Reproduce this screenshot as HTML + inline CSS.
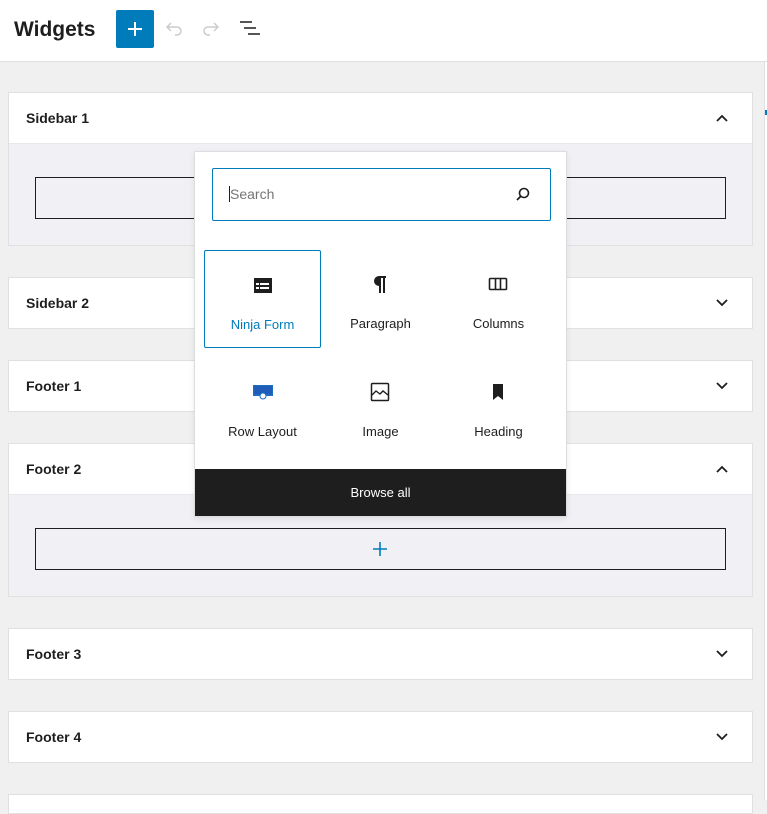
<!DOCTYPE html><html><head><style>
*{box-sizing:border-box;margin:0;padding:0}
body{width:767px;height:800px;overflow:hidden;background:#f0f0f0;font-family:"Liberation Sans",sans-serif;color:#1e1e1e;position:relative}
.hdr{position:absolute;left:0;top:0;width:767px;height:62px;background:#fff;border-bottom:1px solid #e0e0e0}
.abs{position:absolute}
.panel{position:absolute;left:8px;width:745px;background:#fff;border:1px solid #e0e0e0}
.ph{height:50px;display:flex;align-items:center;padding-left:17px;font-size:14px;font-weight:bold;color:#1e1e1e;position:relative}
.ph svg{position:absolute;right:24px;top:21px}
.pb{background:#f0f0f5;height:102px;position:relative;border-top:1px solid #e8e8ec}
.box{position:absolute;left:26px;right:26px;top:33px;height:42px;border:1px solid #1e1e1e}
.tile{position:absolute;width:117px;height:98px;text-align:center;font-size:13px;color:#1e1e1e}
.tile svg{position:absolute;left:48px;top:24px}
.tile span{position:absolute;left:0;right:0;top:66px}
</style></head><body>
<div class="hdr">
<div class="abs" style="left:14px;top:18px;font-size:21px;font-weight:bold">Widgets</div>
<div class="abs" style="left:116px;top:10px;width:38px;height:38px;background:#007cba;border-radius:2px"><svg width="38" height="38"><path d="M19 12v14M12 19h14" stroke="#fff" stroke-width="2"/></svg></div>
<svg class="abs" style="left:162px;top:18px" width="24" height="24"><path d="M6 9h9a4 4 0 0 1 0 8h-2M9 5l-4 4 4 4" stroke="#ccc" stroke-width="1.5" fill="none"/></svg>
<svg class="abs" style="left:199px;top:18px" width="24" height="24"><path d="M18 9H9a4 4 0 0 0 0 8h2M15 5l4 4-4 4" stroke="#ccc" stroke-width="1.5" fill="none"/></svg>
<svg class="abs" style="left:238px;top:18px" width="24" height="24"><path d="M2 4h12M6 10h12M10 16h12" stroke="#1e1e1e" stroke-width="1.6"/></svg>
</div>
<div class="abs" style="left:764px;top:62px;width:1px;height:738px;background:#e0e0e0"></div>
<div class="abs" style="left:765px;top:62px;width:2px;height:738px;background:#fff"></div>
<div class="abs" style="left:765px;top:110px;width:2px;height:5px;background:#007cba"></div>

<div class="panel" style="top:92px"><div class="ph">Sidebar 1<svg width="12" height="8"><path d="M1 7l5-5 5 5" stroke="#1e1e1e" stroke-width="1.8" fill="none"/></svg></div><div class="pb"><div class="box"></div></div></div>
<div class="panel" style="top:277px"><div class="ph">Sidebar 2<svg width="12" height="8"><path d="M1 1l5 5 5-5" stroke="#1e1e1e" stroke-width="1.8" fill="none"/></svg></div></div>
<div class="panel" style="top:360px"><div class="ph">Footer 1<svg width="12" height="8"><path d="M1 1l5 5 5-5" stroke="#1e1e1e" stroke-width="1.8" fill="none"/></svg></div></div>
<div class="panel" style="top:443px"><div class="ph">Footer 2<svg width="12" height="8"><path d="M1 7l5-5 5 5" stroke="#1e1e1e" stroke-width="1.8" fill="none"/></svg></div><div class="pb"><div class="box"><svg style="position:absolute;left:337px;top:13px" width="14" height="14"><path d="M7 0v14M0 7h14" stroke="#007cba" stroke-width="1.6"/></svg></div></div></div>
<div class="panel" style="top:628px"><div class="ph">Footer 3<svg width="12" height="8"><path d="M1 1l5 5 5-5" stroke="#1e1e1e" stroke-width="1.8" fill="none"/></svg></div></div>
<div class="panel" style="top:711px"><div class="ph">Footer 4<svg width="12" height="8"><path d="M1 1l5 5 5-5" stroke="#1e1e1e" stroke-width="1.8" fill="none"/></svg></div></div>
<div class="panel" style="top:794px;height:20px"></div>

<div class="abs" style="left:194px;top:151px;width:373px;height:366px;background:#fff;border:1px solid #ddd;box-shadow:0 2px 6px rgba(0,0,0,.08)">
<div class="abs" style="left:17px;top:16px;width:339px;height:53px;border:1.5px solid #007cba;border-radius:2px">
<div class="abs" style="left:16px;top:17px;font-size:14px;color:#757575"><span style="border-left:1px solid #1e1e1e"></span>Search</div>
<svg class="abs" style="left:301px;top:17px" width="18" height="18"><circle cx="10" cy="7" r="4.5" stroke="#1e1e1e" stroke-width="1.6" fill="none"/><path d="M7 10l-4 4" stroke="#1e1e1e" stroke-width="1.8"/></svg>
</div>
<div class="tile" style="left:9px;top:98px;border:1px solid #007cba;border-radius:2px;color:#007cba"><svg width="20" height="20"><rect x="1" y="3" width="18" height="15" fill="#1e1e1e"/><rect x="3" y="8" width="3" height="2" fill="#fff"/><rect x="7" y="8" width="9" height="2" fill="#fff"/><rect x="3" y="12" width="3" height="2" fill="#fff"/><rect x="7" y="12" width="9" height="2" fill="#fff"/></svg><span>Ninja Form</span></div>
<div class="tile" style="left:127px;top:98px"><svg width="20" height="20"><path d="M9 2h7v2h-1v15h-2V4h-2v15H9v-7a5 5 0 0 1 0-10z" fill="#1e1e1e"/></svg><span>Paragraph</span></div>
<div class="tile" style="left:245px;top:98px"><svg width="20" height="20"><rect x="1.5" y="4.5" width="17" height="11" rx="1" stroke="#1e1e1e" stroke-width="1.6" fill="none"/><path d="M7.5 5v10M12.5 5v10" stroke="#1e1e1e" stroke-width="1.6"/></svg><span>Columns</span></div>
<div class="tile" style="left:9px;top:206px"><svg width="22" height="20"><rect x="1" y="3" width="20" height="11" fill="#1b6ec2"/><rect x="2" y="4" width="18" height="8" fill="#1f5db8"/><circle cx="11" cy="14" r="3" fill="#fff" stroke="#1b6ec2" stroke-width="1"/></svg><span>Row Layout</span></div>
<div class="tile" style="left:127px;top:206px"><svg width="20" height="20"><rect x="1.5" y="1.5" width="17" height="17" rx="1" stroke="#1e1e1e" stroke-width="1.5" fill="none"/><path d="M2 13l4-4 4 3 3-3 5 4" stroke="#1e1e1e" stroke-width="1.4" fill="none"/></svg><span>Image</span></div>
<div class="tile" style="left:245px;top:206px"><svg width="20" height="20"><path d="M5 2h10v16l-5-4-5 4z" fill="#1e1e1e"/></svg><span>Heading</span></div>
<div class="abs" style="left:0;top:317px;width:371px;height:47px;background:#1e1e1e;color:#fff;font-size:13px;text-align:center;line-height:47px">Browse all</div>
</div>
</body></html>
